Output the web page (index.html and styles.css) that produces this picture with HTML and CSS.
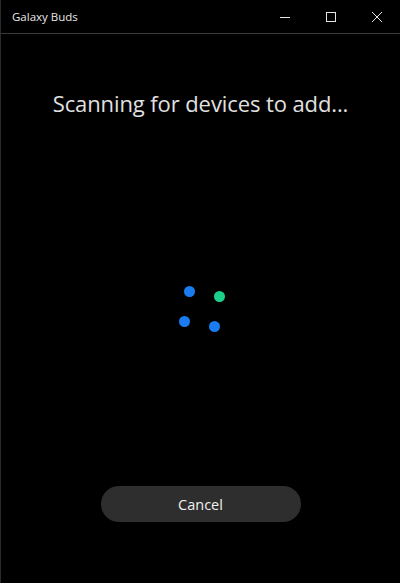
FILE: index.html
```html
<!DOCTYPE html>
<html>
<head>
<meta charset="utf-8">
<link rel="stylesheet" href="styles.css">
</head>
<body>
<div class="window">
  <div class="titlebar">
    <div class="title">Galaxy Buds</div>
    <div class="controls">
      <div class="ctrl"><svg width="10" height="10" viewBox="0 0 10 10"><path d="M0 5.5H10" stroke="#e6e6e6" stroke-width="1"/></svg></div>
      <div class="ctrl"><svg width="10" height="10" viewBox="0 0 10 10"><rect x="0.5" y="0.5" width="9" height="9" fill="none" stroke="#e6e6e6" stroke-width="1"/></svg></div>
      <div class="ctrl"><svg width="10" height="10" viewBox="0 0 10 10"><path d="M0 0L10 10M10 0L0 10" stroke="#e6e6e6" stroke-width="1"/></svg></div>
    </div>
  </div>
  <div class="content">
    <h1 class="heading">Scanning for devices to add...</h1>
    <div class="spinner">
      <span class="dot blue d1"></span>
      <span class="dot green d2"></span>
      <span class="dot blue d3"></span>
      <span class="dot blue d4"></span>
    </div>
    <button class="cancel">Cancel</button>
  </div>
</div>
</body>
</html>
```
FILE: styles.css
```css
html, body {
  margin: 0;
  padding: 0;
  background: #000;
  width: 400px;
  height: 583px;
  overflow: hidden;
}
.window {
  width: 400px;
  height: 583px;
  display: flex;
  flex-direction: column;
  box-sizing: border-box;
  border-left: 1px solid #2b2b2b;
  font-family: "Open Sans", "Noto Sans", sans-serif;
}
.titlebar {
  height: 33px;
  display: flex;
  align-items: center;
  justify-content: space-between;
  border-bottom: 1px solid #3a3a3a;
  flex-shrink: 0;
}
.title {
  color: #e8e8e8;
  font-size: 11.5px;
  padding-left: 11px;
  padding-bottom: 1px;
}
.controls {
  display: flex;
  height: 100%;
}
.ctrl {
  width: 46px;
  height: 100%;
  display: flex;
  align-items: center;
  justify-content: center;
}
.content {
  flex: 1;
  display: flex;
  flex-direction: column;
  align-items: center;
}
.heading {
  margin: 54px 0 0 0;
  font-weight: 400;
  font-size: 22px;
  color: #e0e0e0;
  letter-spacing: -0.1px;
  line-height: 30px;
}
.spinner {
  position: relative;
  width: 50px;
  height: 50px;
  margin-top: 168px;
}
.dot {
  position: absolute;
  width: 11px;
  height: 11px;
  border-radius: 50%;
}
.blue { background: #1a7cf0; }
.green { background: #1dd08a; }
.d1 { left: 8px; top: 0px; }
.d2 { left: 38px; top: 5px; }
.d3 { left: 3px; top: 30px; }
.d4 { left: 33px; top: 35px; }
.cancel {
  margin-top: 150px;
  width: 200px;
  height: 36px;
  border: none;
  border-radius: 18px;
  background: #2e2e2e;
  color: #f0f0f0;
  font-family: "Open Sans", "Noto Sans", sans-serif;
  font-size: 14.5px;
  padding: 0;
}
```
